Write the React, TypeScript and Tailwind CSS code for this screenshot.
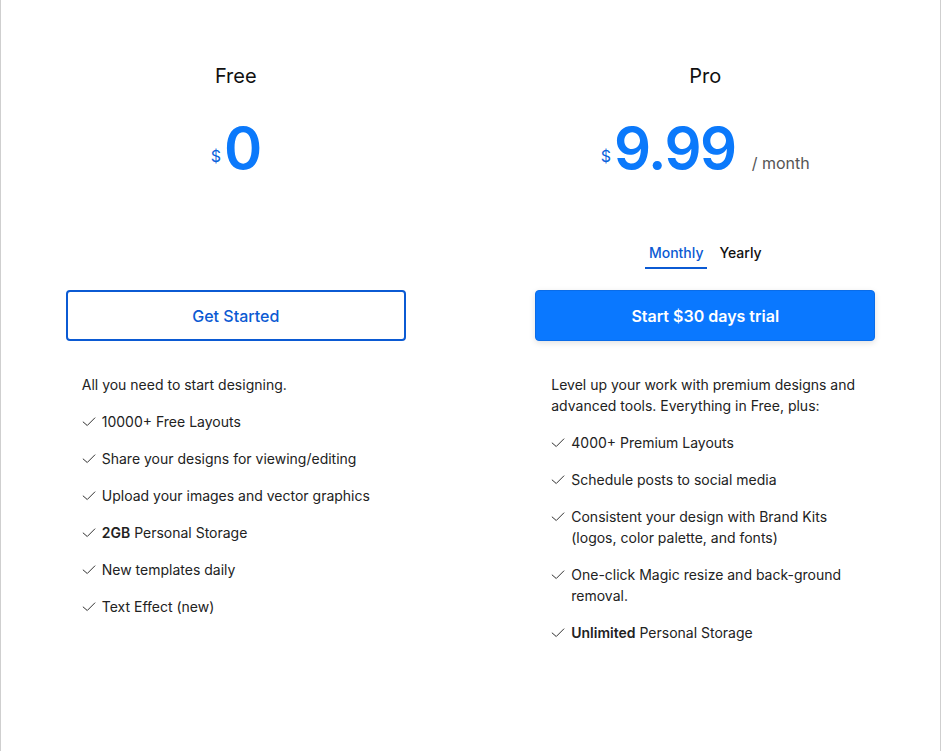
import React, { useState } from 'react';

type Feature = { bold?: string; text: string };

const freeFeatures: Feature[] = [
  { text: '10000+ Free Layouts' },
  { text: 'Share your designs for viewing/editing' },
  { text: 'Upload your images and vector graphics' },
  { bold: '2GB', text: ' Personal Storage' },
  { text: 'New templates daily' },
  { text: 'Text Effect (new)' },
];

const proFeatures: Feature[] = [
  { text: '4000+ Premium Layouts' },
  { text: 'Schedule posts to social media' },
  { text: 'Consistent your design with Brand Kits (logos, color palette, and fonts)' },
  { text: 'One-click Magic resize and back-ground removal.' },
  { bold: 'Unlimited', text: ' Personal Storage' },
];

function CheckIcon() {
  return (
    <svg
      width="14"
      height="14"
      viewBox="0 0 24 24"
      fill="none"
      stroke="currentColor"
      strokeWidth="1.6"
      strokeLinecap="round"
      strokeLinejoin="round"
      className="shrink-0 mt-[4px] text-[#222]"
    >
      <polyline points="22 5 9 18 2 12" />
    </svg>
  );
}

function FeatureList({ intro, items }: { intro: string; items: Feature[] }) {
  return (
    <div className="w-[340px] px-4 pt-[33px] text-[14px] text-[#222] flex flex-col gap-4">
      <p className="leading-[21px]">{intro}</p>
      {items.map((f, i) => (
        <div key={i} className="flex items-start gap-[6px] leading-[21px]">
          <CheckIcon />
          <span>
            {f.bold && <strong className="font-semibold">{f.bold}</strong>}
            {f.text}
          </span>
        </div>
      ))}
    </div>
  );
}

function Price({ amount, suffix }: { amount: string; suffix?: string }) {
  return (
    <div className="mt-[29px] text-center text-[58px] leading-none h-[58px]">
      <span className="text-[16px] text-[#0b63dc] align-[7px] mr-[3px]">$</span>
      <span className="font-semibold text-[#0b79fb] tracking-[-1.5px]">{amount}</span>
      {suffix && <span className="text-[16px] text-[#555] ml-4">{suffix}</span>}
    </div>
  );
}

export default function App() {
  const [billing, setBilling] = useState<'monthly' | 'yearly'>('monthly');

  return (
    <div className="w-[941px] h-[751px] bg-white font-['Inter','Noto_Sans',sans-serif] overflow-hidden">
      <div className="h-full border-l border-r border-[#cfcfcf] grid grid-cols-2">
        {/* Free plan */}
        <div className="flex flex-col items-center pt-[62px]">
          <h2 className="text-[20px] leading-[28px] text-[#111]">Free</h2>
          <Price amount="0" />
          <div className="mt-[66px] h-[26px]" />
          <button className="mt-[21px] w-[340px] h-[51px] rounded border-2 border-[#0b5ad3] text-[#0b5ad3] text-[16px] font-medium">
            Get Started
          </button>
          <FeatureList intro="All you need to start designing." items={freeFeatures} />
        </div>

        {/* Pro plan */}
        <div className="flex flex-col items-center pt-[62px]">
          <h2 className="text-[20px] leading-[28px] text-[#111]">Pro</h2>
          <Price amount="9.99" suffix="/ month" />
          <div className="mt-[66px] flex gap-2 text-[14px] leading-[20px] font-medium">
            <button
              onClick={() => setBilling('monthly')}
              className={
                billing === 'monthly'
                  ? 'px-1 pb-1 border-b-2 border-[#0b5ad3] text-[#0b5ad3]'
                  : 'px-1 pb-1 border-b-2 border-transparent text-[#111]'
              }
            >
              Monthly
            </button>
            <button
              onClick={() => setBilling('yearly')}
              className={
                billing === 'yearly'
                  ? 'px-1 pb-1 border-b-2 border-[#0b5ad3] text-[#0b5ad3]'
                  : 'px-1 pb-1 border-b-2 border-transparent text-[#111]'
              }
            >
              Yearly
            </button>
          </div>
          <button className="mt-[21px] w-[340px] h-[51px] rounded border border-[#0a6ce8] bg-[#0a78ff] text-white text-[16px] font-semibold shadow-[0_2px_6px_rgba(0,0,0,0.12)]">
            Start $30 days trial
          </button>
          <FeatureList
            intro="Level up your work with premium designs and advanced tools. Everything in Free, plus:"
            items={proFeatures}
          />
        </div>
      </div>
    </div>
  );
}
